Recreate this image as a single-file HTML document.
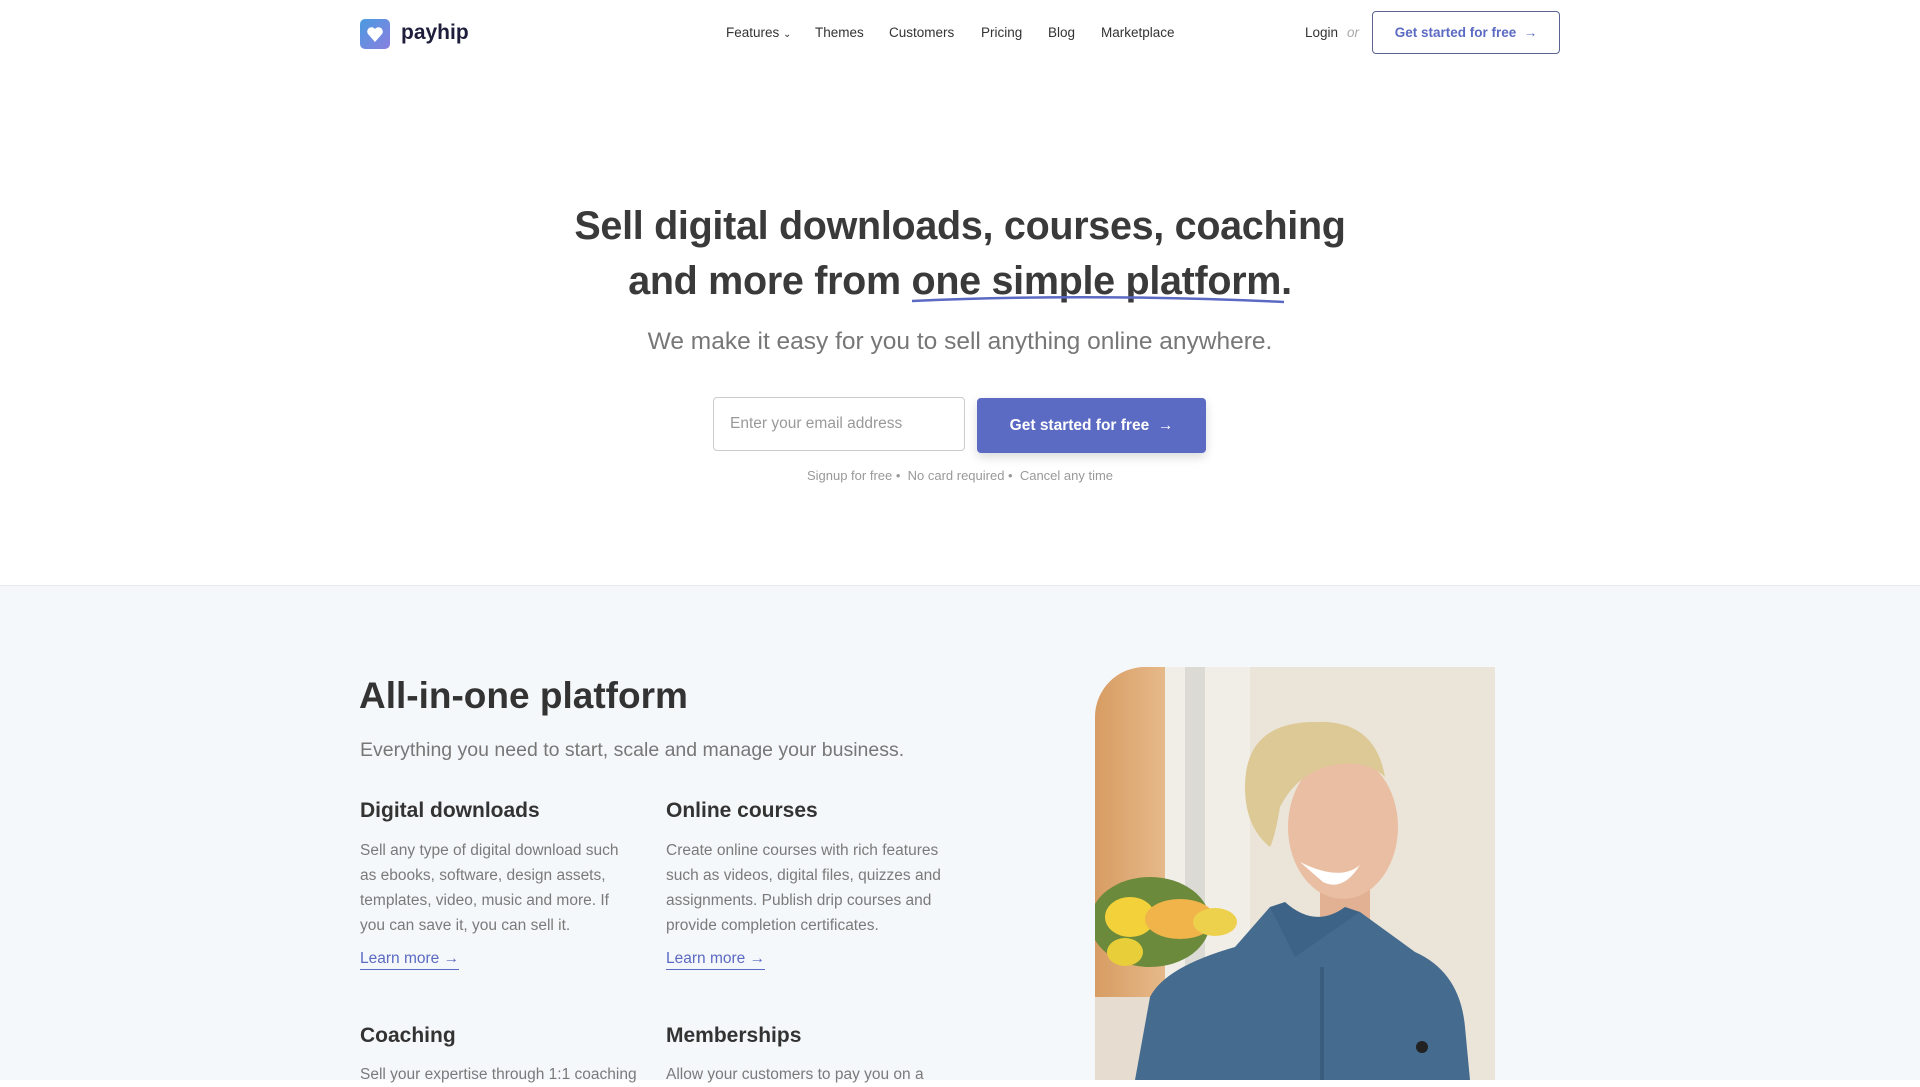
<!DOCTYPE html>
<html><head><meta charset="utf-8"><style>
*{margin:0;padding:0;box-sizing:border-box}
body{width:1920px;height:1080px;overflow:hidden;font-family:"Liberation Sans",sans-serif;background:#fff;color:#333;position:relative}
.a{position:absolute;white-space:nowrap}
.nav{font-size:13.5px;color:#333;top:25px}
.h1{font-size:39.5px;font-weight:bold;color:#3a3a3a;width:1920px;text-align:center;left:0;letter-spacing:-0.3px}
.gray{position:absolute;top:585px;left:0;width:1920px;height:495px;background:#f5f8fa;border-top:1px solid #e6eaee}
.h3{font-size:21px;font-weight:bold;color:#333}
.p{font-size:15.5px;line-height:25px;color:#7a7a7a;white-space:normal;width:278px}
.lm{font-size:15.5px;color:#5b6ac2;border-bottom:1px solid #5b6ac2;padding-bottom:1px}
</style></head><body>
<svg class="a" style="left:360px;top:19px" width="30" height="30" viewBox="0 0 30 30"><defs><linearGradient id="g" x1="0" y1="0" x2="1" y2="1"><stop offset="0" stop-color="#4a9be0"/><stop offset="1" stop-color="#8a7fe0"/></linearGradient></defs><rect width="30" height="30" rx="5" fill="url(#g)"/><path d="M15 23 L8 15 A4 4 0 0 1 15 10 A4 4 0 0 1 22 15 Z" fill="#fff"/></svg>
<div class="a" style="left:401px;top:21px;font-size:21px;font-weight:bold;color:#1e1e3c">payhip</div>
<div class="a nav" style="left:726px">Features <span style="font-size:10px">&#8964;</span></div>
<div class="a nav" style="left:815px">Themes</div>
<div class="a nav" style="left:889px">Customers</div>
<div class="a nav" style="left:981px">Pricing</div>
<div class="a nav" style="left:1048px">Blog</div>
<div class="a nav" style="left:1101px">Marketplace</div>
<div class="a nav" style="left:1305px">Login</div>
<div class="a nav" style="left:1347px;color:#aaa;font-style:italic">or</div>
<div class="a" style="left:1372px;top:11px;width:188px;height:43px;border:1px solid #5b6490;border-radius:4px;color:#5b6ac2;font-size:13.5px;font-weight:bold;text-align:center;line-height:41px">Get started for free &nbsp;→</div>

<div class="a h1" style="top:204px">Sell digital downloads, courses, coaching</div>
<div class="a h1" style="top:259px">and more from one simple platform.</div>
<svg class="a" style="left:910px;top:294px" width="376" height="12"><path d="M2 7 Q180 -1 374 8" stroke="#5b6ac2" stroke-width="2.5" fill="none"/></svg>
<div class="a" style="top:328px;left:0;width:1920px;text-align:center;font-size:24.5px;color:#777">We make it easy for you to sell anything online anywhere.</div>
<div class="a" style="left:713px;top:397px;width:252px;height:54px;border:1px solid #ccc;border-radius:4px;font-size:15.5px;color:#999;padding-left:16px;line-height:52px">Enter your email address</div>
<div class="a" style="left:977px;top:398px;width:229px;height:55px;background:#5b6ac2;border-radius:4px;color:#fff;font-size:15.5px;font-weight:bold;text-align:center;line-height:55px;box-shadow:0 4px 10px rgba(0,0,0,.15)">Get started for free &nbsp;→</div>
<div class="a" style="top:468px;left:0;width:1920px;text-align:center;font-size:13px;color:#999">Signup for free • &nbsp;No card required • &nbsp;Cancel any time</div>

<div class="gray"></div>
<div class="a" style="left:359px;top:675px;font-size:37px;font-weight:bold;color:#333">All-in-one platform</div>
<div class="a" style="left:360px;top:739px;font-size:19.5px;color:#777">Everything you need to start, scale and manage your business.</div>
<div class="a h3" style="left:360px;top:799px">Digital downloads</div>
<div class="a h3" style="left:666px;top:799px">Online courses</div>
<div class="a p" style="left:360px;top:838px">Sell any type of digital download such as ebooks, software, design assets, templates, video, music and more. If you can save it, you can sell it.</div>
<div class="a p" style="left:666px;top:838px">Create online courses with rich features such as videos, digital files, quizzes and assignments. Publish drip courses and provide completion certificates.</div>
<div class="a lm" style="left:360px;top:950px">Learn more →</div>
<div class="a lm" style="left:666px;top:950px">Learn more →</div>
<div class="a h3" style="left:360px;top:1024px">Coaching</div>
<div class="a h3" style="left:666px;top:1024px">Memberships</div>
<div class="a p" style="left:360px;top:1062px;width:300px">Sell your expertise through 1:1 coaching</div>
<div class="a p" style="left:666px;top:1062px">Allow your customers to pay you on a</div>

<svg class="a" style="left:1095px;top:667px" width="400" height="413" viewBox="0 0 400 413">
<defs><clipPath id="c"><path d="M50 0 H400 V413 H0 V50 A50 50 0 0 1 50 0Z"/></clipPath>
<linearGradient id="w" x1="0" x2="1"><stop offset="0" stop-color="#d79c62"/><stop offset="1" stop-color="#e6b98a"/></linearGradient></defs>
<g clip-path="url(#c)">
<rect width="400" height="413" fill="#ebe4d8"/>
<rect width="70" height="413" fill="url(#w)"/>
<rect x="70" width="85" height="413" fill="#f1eee8"/>
<rect x="90" width="20" height="413" fill="#dcdad5"/>
<rect x="0" y="330" width="80" height="83" fill="#e6ddd0"/>
<ellipse cx="55" cy="255" rx="60" ry="45" fill="#6b8a3c"/>
<ellipse cx="35" cy="250" rx="25" ry="20" fill="#f2d13a"/>
<ellipse cx="85" cy="252" rx="35" ry="20" fill="#f0b44a"/>
<ellipse cx="120" cy="255" rx="22" ry="14" fill="#edd04c"/>
<ellipse cx="30" cy="285" rx="18" ry="14" fill="#e8cf3a"/>
<rect x="225" y="200" width="50" height="60" fill="#e2b093"/>
<ellipse cx="248" cy="160" rx="55" ry="72" fill="#eabea2"/>
<path d="M150 120 Q150 55 220 55 Q280 52 290 110 Q270 90 230 100 Q200 110 185 140 Q180 170 175 180 Q150 160 150 120Z" fill="#ddc995"/>
<path d="M205 195 Q245 215 265 198 Q248 225 228 215 Z" fill="#fff"/>
<path d="M40 413 L55 330 Q70 300 140 280 L175 240 Q220 270 265 245 L320 285 Q365 305 370 360 L375 413Z" fill="#456b8e"/>
<path d="M175 240 L200 290 L265 245 L250 240 Q220 262 190 235Z" fill="#3d6386"/>
<rect x="225" y="300" width="4" height="113" fill="#3a5d7e"/>
<circle cx="327" cy="380" r="6" fill="#222"/>
</g></svg>
</body></html>
